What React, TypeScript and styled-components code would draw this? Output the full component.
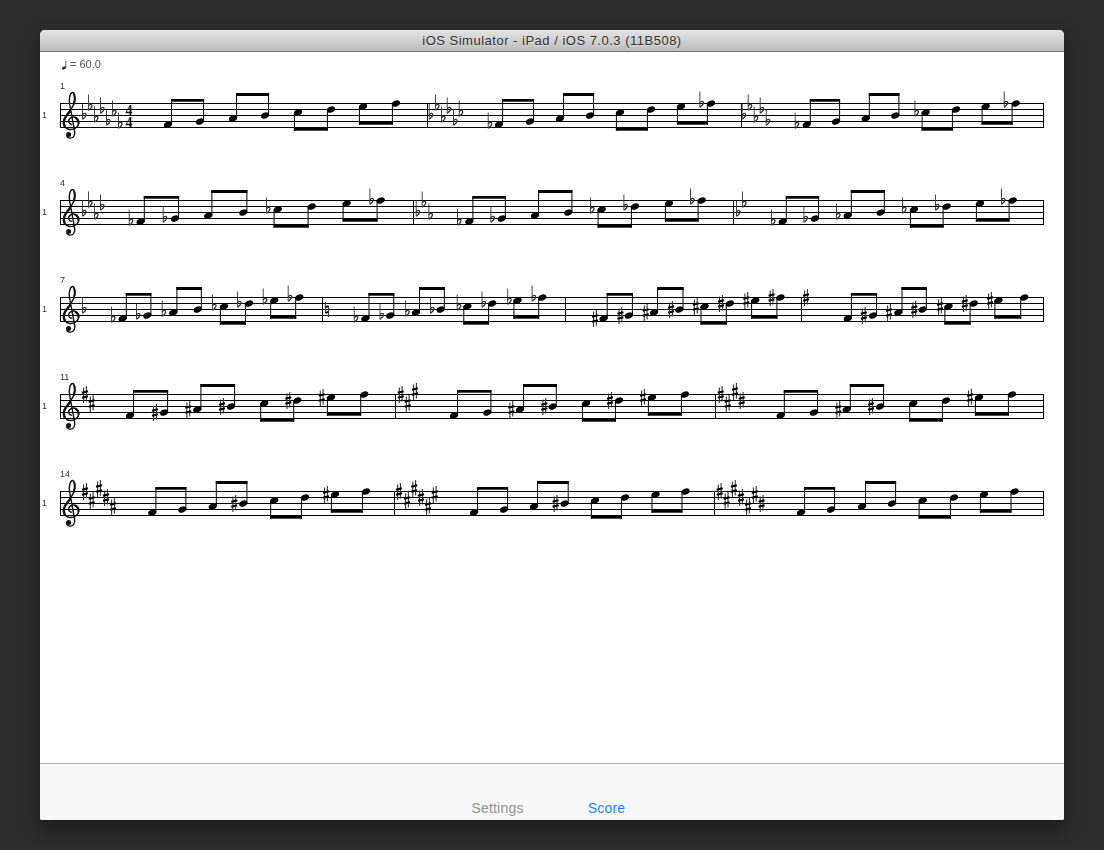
import React from 'react';
import styled, { createGlobalStyle } from 'styled-components';

const Global = createGlobalStyle`
  html, body { margin: 0; padding: 0; background: #2d2d2d; }
  body { width: 1104px; height: 850px; overflow: hidden; }
`;

const Desktop = styled.div`
  width: 1104px;
  height: 850px;
  padding: 30px 40px;
  box-sizing: border-box;
  background: #2d2d2d;
`;

const Window = styled.div`
  width: 1024px;
  height: 790px;
  display: flex;
  flex-direction: column;
  border-radius: 5px 5px 2px 2px;
  box-shadow: 0 8px 18px rgba(0, 0, 0, 0.45);
  background: #fff;
  overflow: hidden;
`;

const TitleBar = styled.div`
  height: 22px;
  flex: none;
  box-sizing: border-box;
  display: flex;
  align-items: center;
  justify-content: center;
  background: linear-gradient(#e4e4e4, #bcbcbc);
  border-bottom: 1px solid #757575;
  font: 13px 'Liberation Sans', Arial, sans-serif;
  letter-spacing: 0.5px;
  color: #333;
  text-shadow: 0 1px 0 rgba(255, 255, 255, 0.4);
`;

const ScoreArea = styled.div`
  flex: 1;
  min-height: 0;
  background: #fff;
`;

const ScoreSvg = styled.svg`
  display: block;
  will-change: transform;
`;

const Label = styled.text<{ $size?: number; $tone?: string }>`
  font-family: 'Liberation Sans', Arial, sans-serif;
  font-size: ${(p) => p.$size ?? 9}px;
  fill: ${(p) => p.$tone ?? '#333'};
`;

const TimeDigit = styled.text`
  font-family: 'Liberation Serif', 'Times New Roman', serif;
  font-weight: bold;
  font-size: 14px;
  text-anchor: middle;
  fill: #111;
`;

const TabBar = styled.div`
  height: 57px;
  flex: none;
  box-sizing: border-box;
  display: flex;
  justify-content: center;
  align-items: flex-end;
  background: #f7f7f7;
  border-top: 1px solid #b2b2b2;
  padding-bottom: 3px;
`;

const Tab = styled.div<{ $active?: boolean }>`
  width: 109px;
  text-align: center;
  font: 14px/18px 'Liberation Sans', Arial, sans-serif;
  letter-spacing: 0.2px;
  color: ${(p) => (p.$active ? '#1a84ff' : '#949494')};
`;

type Kind = 'flat' | 'sharp';
type Measure = {
  end: number;
  kind: Kind;
  key: number[];
  notes: number[];
  acc?: [number, number][];
  time?: number;
  natural?: number;
};
type System = { num: string; measures: Measure[] };

const FLAT_ORDER = [12, 3, 15, 6, 18, 9, 21];
const SHARP_ORDER = [0, 9, -3, 6, 15, 3, 12];
const PITCH = [21, 18, 15, 12, 9, 6, 3, 0];

const SYSTEMS: System[] = [
  {
    num: '1',
    measures: [
      { end: 427, kind: 'flat', key: [84.3, 90.3, 96.3, 102.3, 108.3, 114.3, 120.3], time: 129, notes: [168, 200, 233, 265, 298, 331, 363, 396] },
      { end: 741, kind: 'flat', key: [431, 437.3, 443.3, 449, 455.3, 461], notes: [499, 530, 560, 590, 620, 651, 681, 711], acc: [[0, 490], [7, 701.7]] },
      { end: 1044, kind: 'flat', key: [744, 750, 756, 762, 768], notes: [806.7, 836, 865.7, 895.3, 925.7, 956, 985.7, 1015.7], acc: [[0, 797], [4, 916.7], [7, 1006]] },
    ],
  },
  {
    num: '4',
    measures: [
      { end: 413, kind: 'flat', key: [84.3, 90.3, 96.3, 102.3], notes: [140.7, 175, 208.3, 243.3, 277.7, 311.7, 346.7, 380.7], acc: [[0, 131], [1, 165], [4, 268.3], [7, 371.7]] },
      { end: 733, kind: 'flat', key: [418, 424, 430.7], notes: [469.3, 501.7, 535, 568.3, 601.7, 635, 669, 701.7], acc: [[0, 459.3], [1, 492.7], [4, 592.3], [5, 625.7], [7, 692.3]] },
      { end: 1044, kind: 'flat', key: [738.3, 744.3], notes: [782.7, 815, 847.7, 880.7, 914, 946.7, 980, 1012.7], acc: [[0, 773.3], [1, 805.7], [2, 838.3], [4, 904.3], [5, 937.3], [7, 1003.3]] },
    ],
  },
  {
    num: '7',
    measures: [
      { end: 322, kind: 'flat', key: [84.3], notes: [122.7, 147.3, 173.3, 197.7, 224, 249, 274.3, 299.3], acc: [[0, 113.3], [1, 138.3], [2, 164], [4, 214.3], [5, 239.3], [6, 265], [7, 290]] },
      { end: 565, kind: 'flat', key: [], natural: 327, notes: [365.4, 390.2, 415.9, 440.7, 467.4, 492.2, 517.5, 542.3], acc: [[0, 356], [1, 381.8], [2, 407.5], [3, 432.3], [4, 459], [5, 483.8], [6, 509.5], [7, 533.9]] },
      { end: 801, kind: 'sharp', key: [], notes: [603.6, 628.8, 654, 679.4, 704.6, 729.9, 755.2, 780.5], acc: [[0, 595], [1, 620.4], [2, 645.7], [3, 671], [4, 695.8], [5, 721], [6, 746.3], [7, 771.6]] },
      { end: 1044, kind: 'sharp', key: [806], notes: [847.8, 873, 898.4, 922.7, 948.5, 973.7, 998.5, 1024.3], acc: [[1, 863.8], [2, 889], [3, 914.3], [4, 940], [5, 964.8], [6, 990]] },
    ],
  },
  {
    num: '11',
    measures: [
      { end: 395, kind: 'sharp', key: [85, 91.7], notes: [130, 164, 197.3, 231, 264.3, 297.3, 331, 364.3], acc: [[1, 155], [2, 188.3], [3, 222], [5, 288.3], [6, 321.7]] },
      { end: 715, kind: 'sharp', key: [400.7, 407.7, 415], notes: [454, 487.3, 520, 552.7, 586, 619, 652, 685], acc: [[2, 511.3], [3, 544.3], [5, 610], [6, 643]] },
      { end: 1044, kind: 'sharp', key: [720.7, 727.7, 735, 741.7], notes: [780.7, 814, 846.7, 880, 913.3, 946, 979, 1012], acc: [[2, 838.3], [3, 871], [6, 970]] },
    ],
  },
  {
    num: '14',
    measures: [
      { end: 394, kind: 'sharp', key: [85, 91.7, 99, 106, 113], notes: [152.3, 182.3, 212.7, 243.3, 274.3, 305, 335, 366], acc: [[3, 234.3], [6, 326]] },
      { end: 714, kind: 'sharp', key: [399, 407, 414.2, 421, 428, 434.7], notes: [474, 504, 534, 564.6, 595, 625, 655.6, 685.6], acc: [[3, 555.6]] },
      { end: 1044, kind: 'sharp', key: [719.7, 726.6, 733.8, 741, 748, 754.8, 761.6], notes: [801, 831, 862, 892, 922.7, 954, 984, 1014.6] },
    ],
  },
];

const SYSTEM_GAP = 97;
const FIRST_TOP = 103.5;

const Flat = ({ x, y }: { x: number; y: number }) => (
  <g fill="none" stroke="#333" strokeWidth={0.9}>
    <path d={`M${x - 1.8} ${y - 12}V${y + 3.8}`} />
    <path d={`M${x - 1.8} ${y - 0.6}C${x - 0.6} ${y - 2.6} ${x + 2} ${y - 2.8} ${x + 1.7} ${y - 0.4}C${x + 1.4} ${y + 1.4} ${x - 0.4} ${y + 2.6} ${x - 1.8} ${y + 3.8}`} strokeWidth={1.3} />
  </g>
);

const Sharp = ({ x, y }: { x: number; y: number }) => (
  <g>
    <path d={`M${x - 1.4} ${y - 7}V${y + 8.5}M${x + 1.4} ${y - 8.5}V${y + 7}`} stroke="#333" strokeWidth={1.1} fill="none" />
    <path d={`M${x - 3} ${y - 1.8}L${x + 3} ${y - 3.2}M${x - 3} ${y + 3.2}L${x + 3} ${y + 1.8}`} stroke="#000" strokeWidth={2.1} fill="none" />
  </g>
);

const Natural = ({ x, y }: { x: number; y: number }) => (
  <g>
    <path d={`M${x - 1.6} ${y - 7.5}V${y + 3.5}M${x + 1.6} ${y - 3.5}V${y + 7.5}`} stroke="#333" strokeWidth={1} fill="none" />
    <path d={`M${x - 1.6} ${y - 2.4}L${x + 1.6} ${y - 3.4}M${x - 1.6} ${y + 3.4}L${x + 1.6} ${y + 2.4}`} stroke="#000" strokeWidth={2} fill="none" />
  </g>
);

// drawn for a staff whose top line is at y 103.5, moved by the system's group
const Clef = () => (
  <g fill="none" stroke="#111">
    <path
      strokeWidth={1.4}
      d="M71.8 124.2C68.4 124.2 67.2 119.6 71 117.6C75 115.8 79 119 78.6 123.5C78.1 128 72.6 130.2 68.6 129.2C64 128 62.5 123 64.6 118.5C66.6 114 72 109.5 74 103.5C75.6 98.5 74.6 92.5 72.6 92.5C70.2 92.5 68.6 98 69.6 104L74.6 131C75.6 136 72.6 138.6 69.6 138.1C67.8 137.7 66.8 136.6 66.9 135.4"
    />
    <path strokeWidth={2.4} d="M65 127C63.4 124 63.6 120.8 65 118C66.4 115.2 68.6 112.8 70.6 110.6" />
    <path strokeWidth={2.2} d="M75 117.4C77.6 118.6 78.8 121 78.5 123.6" />
    <path strokeWidth={2} d="M73.6 104.5C75 100.5 75 96.5 74 94" />
    <circle cx={68.6} cy={134.6} r={2.5} fill="#111" stroke="none" />
  </g>
);

const Head = ({ x, y }: { x: number; y: number }) => (
  <ellipse cx={x} cy={y} rx={4.3} ry={2.9} fill="#000" transform={`rotate(-24 ${x} ${y})`} />
);

const BEAMS = [
  { a: 0, b: 1, up: true, y: -4.5, h: 2.7 },
  { a: 2, b: 3, up: true, y: -10.5, h: 3 },
  { a: 4, b: 5, up: false, y: 24.2, h: 3 },
  { a: 6, b: 7, up: false, y: 18.2, h: 3 },
];

const MeasureView = ({ m, top }: { m: Measure; top: number }) => {
  const Acc = m.kind === 'flat' ? Flat : Sharp;
  const order = m.kind === 'flat' ? FLAT_ORDER : SHARP_ORDER;
  const barX = m.end >= 1044 ? 1043.5 : Math.floor(m.end) + 0.5;
  return (
    <g>
      <path d={`M${barX} ${top}V${top + 24}`} stroke="#000" strokeWidth={1} />
      {m.key.map((x, i) => (
        <Acc key={i} x={x} y={top + order[i]} />
      ))}
      {m.natural !== undefined && <Natural x={m.natural} y={top + 12} />}
      {m.time !== undefined && (
        <>
          <TimeDigit x={m.time} y={top + 11}>4</TimeDigit>
          <TimeDigit x={m.time} y={top + 23.5}>4</TimeDigit>
        </>
      )}
      {m.acc?.map(([n, x]) => (
        <Acc key={n} x={x} y={top + PITCH[n]} />
      ))}
      {m.notes.map((x, i) => (
        <Head key={i} x={x} y={top + PITCH[i]} />
      ))}
      {BEAMS.map((b) => {
        const off = b.up ? 3.6 : -3.6;
        const x1 = m.notes[b.a] + off;
        const x2 = m.notes[b.b] + off;
        const by = top + b.y;
        const endY = b.up ? by : by + b.h;
        return (
          <g key={b.a}>
            <path
              d={`M${x1} ${top + PITCH[b.a]}V${endY}M${x2} ${top + PITCH[b.b]}V${endY}`}
              stroke="#000"
              strokeWidth={1}
            />
            <rect x={x1 - 0.5} y={by} width={x2 - x1 + 1} height={b.h} fill="#000" />
          </g>
        );
      })}
    </g>
  );
};

const SystemView = ({ s, index }: { s: System; index: number }) => {
  const top = FIRST_TOP + index * SYSTEM_GAP;
  return (
    <g>
      <Label x={60} y={top - 14.5} $size={9}>{s.num}</Label>
      <Label x={42} y={top + 14} $size={9}>1</Label>
      {[0, 6, 12, 18, 24].map((d) => (
        <path key={d} d={`M60 ${top + d}H1044`} stroke="#000" strokeWidth={1} />
      ))}
      <path d={`M60.5 ${top}V${top + 24}`} stroke="#000" strokeWidth={1} />
      <g transform={`translate(0 ${top - FIRST_TOP})`}>
        <Clef />
      </g>
      {s.measures.map((m, i) => (
        <MeasureView key={i} m={m} top={top} />
      ))}
    </g>
  );
};

export default function App() {
  return (
    <>
      <Global />
      <Desktop>
        <Window>
          <TitleBar>iOS Simulator - iPad / iOS 7.0.3 (11B508)</TitleBar>
          <ScoreArea>
            <ScoreSvg width={1024} height={711} viewBox="40 52 1024 711">
              <ellipse cx={64} cy={68} rx={2.2} ry={1.5} fill="#333" transform="rotate(-24 64 68)" />
              <path d="M65.8 67.6V60.5" stroke="#333" strokeWidth={0.8} />
              <Label x={70} y={68} $size={11} $tone="#555">= 60.0</Label>
              {SYSTEMS.map((s, i) => (
                <SystemView key={s.num} s={s} index={i} />
              ))}
            </ScoreSvg>
          </ScoreArea>
          <TabBar>
            <Tab>Settings</Tab>
            <Tab $active>Score</Tab>
          </TabBar>
        </Window>
      </Desktop>
    </>
  );
}
